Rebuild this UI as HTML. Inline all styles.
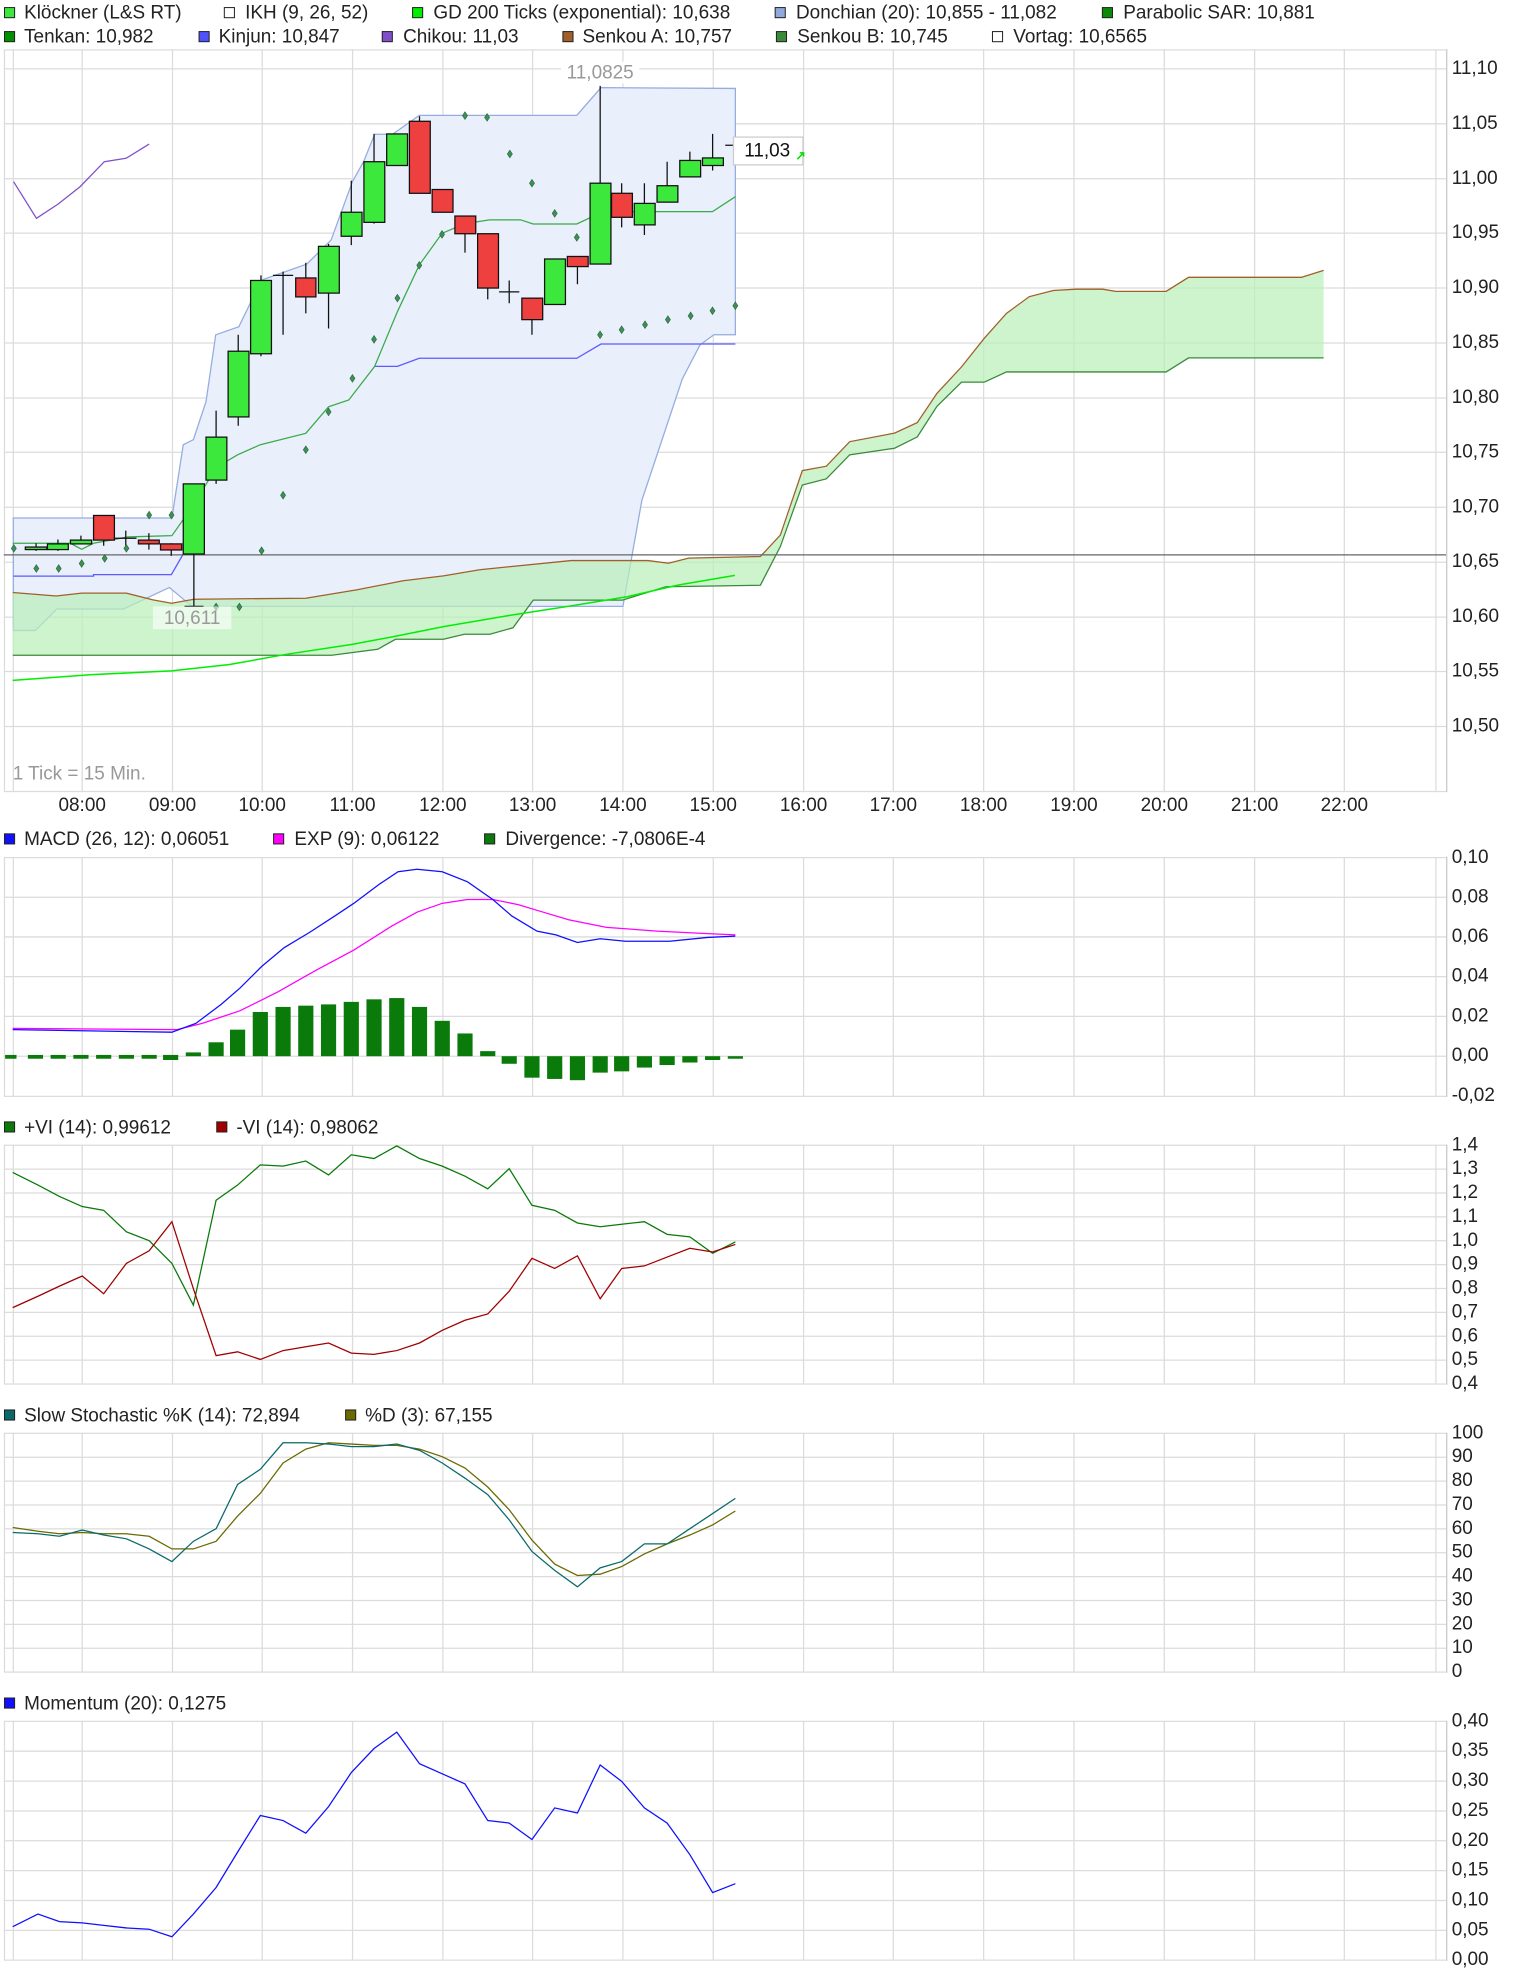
<!DOCTYPE html>
<html><head><meta charset="utf-8">
<style>
html,body{margin:0;padding:0;background:#fff;}
svg{display:block;}
text{font-family:"Liberation Sans",Arial,sans-serif;font-size:15px;fill:#222;}
.ax{dominant-baseline:middle;}
.hr{text-anchor:middle;dominant-baseline:middle;}
</style></head>
<body>
<svg width="1520" height="1981" viewBox="0 0 1203 1568" xmlns="http://www.w3.org/2000/svg">
<rect width="1203" height="1568" fill="#fff"/>
<!-- Legends -->
<g stroke="#222" stroke-width="0.8">
<rect x="3.5" y="6" width="8" height="8" fill="#3de83d"/>
<rect x="177.5" y="6" width="8" height="8" fill="#fff"/>
<rect x="326.5" y="6" width="8" height="8" fill="#00ee00"/>
<rect x="613.5" y="6" width="8" height="8" fill="#90aadd"/>
<rect x="872.5" y="6" width="8" height="8" fill="#0a8a0a"/>
<rect x="3.5" y="25" width="8" height="8" fill="#009000"/>
<rect x="157.5" y="25" width="8" height="8" fill="#5050ff"/>
<rect x="302.5" y="25" width="8" height="8" fill="#8050cc"/>
<rect x="445.5" y="25" width="8" height="8" fill="#a0602a"/>
<rect x="614.5" y="25" width="8" height="8" fill="#3a8a3a"/>
<rect x="785.5" y="25" width="8" height="8" fill="#fff"/>
<rect x="3.5" y="660" width="8" height="8" fill="#1010ff"/>
<rect x="216.5" y="660" width="8" height="8" fill="#ff00ff"/>
<rect x="383.5" y="660" width="8" height="8" fill="#0a7a0a"/>
<rect x="3.5" y="888" width="8" height="8" fill="#0a7a0a"/>
<rect x="171.5" y="888" width="8" height="8" fill="#a00000"/>
<rect x="3.5" y="1116" width="8" height="8" fill="#0a6a6a"/>
<rect x="273.5" y="1116" width="8" height="8" fill="#6a6a00"/>
<rect x="3.5" y="1344" width="8" height="8" fill="#1010ff"/>
</g>
<text x="19" y="14.5">Klöckner (L&amp;S RT)</text>
<text x="194" y="14.5">IKH (9, 26, 52)</text>
<text x="343" y="14.5">GD 200 Ticks (exponential): 10,638</text>
<text x="630" y="14.5">Donchian (20): 10,855 - 11,082</text>
<text x="889" y="14.5">Parabolic SAR: 10,881</text>
<text x="19" y="33.5">Tenkan: 10,982</text>
<text x="173" y="33.5">Kinjun: 10,847</text>
<text x="319" y="33.5">Chikou: 11,03</text>
<text x="461" y="33.5">Senkou A: 10,757</text>
<text x="631" y="33.5">Senkou B: 10,745</text>
<text x="802" y="33.5">Vortag: 10,6565</text>
<text x="19" y="669">MACD (26, 12): 0,06051</text>
<text x="233" y="669">EXP (9): 0,06122</text>
<text x="400" y="669">Divergence: -7,0806E-4</text>
<text x="19" y="897">+VI (14): 0,99612</text>
<text x="187" y="897">-VI (14): 0,98062</text>
<text x="19" y="1125">Slow Stochastic %K (14): 72,894</text>
<text x="289" y="1125">%D (3): 67,155</text>
<text x="19" y="1353">Momentum (20): 0,1275</text>

<!-- Grids -->
<g stroke="#dcdcdc" stroke-width="1" fill="none">
<!-- main -->
<rect x="3.5" y="39.5" width="1141.5" height="587"/>
<path d="M3 54.5H1145M3 98H1145M3 141.5H1145M3 184.5H1145M3 228H1145M3 271.5H1145M3 315H1145M3 358H1145M3 401.5H1145M3 445H1145M3 488.5H1145M3 531.5H1145M3 575H1145"/>
<path id="vg" d="M10.5 39V627M65 39V627M136.5 39V627M207.5 39V627M279 39V627M350.5 39V627M421.5 39V627M493 39V627M564.5 39V627M636 39V627M707 39V627M778.5 39V627M850 39V627M921.5 39V627M993 39V627M1064 39V627M1136.5 39V627"/>
<!-- MACD -->
<rect x="3.5" y="678.8" width="1141.5" height="189"/>
<path d="M3 710.2H1145M3 741.6H1145M3 773H1145M3 804.5H1145M3 836H1145"/>
<path d="M10.5 679V868M65 679V868M136.5 679V868M207.5 679V868M279 679V868M350.5 679V868M421.5 679V868M493 679V868M564.5 679V868M636 679V868M707 679V868M778.5 679V868M850 679V868M921.5 679V868M993 679V868M1064 679V868M1136.5 679V868"/>
<!-- VI -->
<rect x="3.5" y="906.5" width="1141.5" height="189"/>
<path d="M3 925.4H1145M3 944.3H1145M3 963.2H1145M3 982.1H1145M3 1001H1145M3 1019.9H1145M3 1038.8H1145M3 1057.7H1145M3 1076.6H1145"/>
<path d="M10.5 906V1095M65 906V1095M136.5 906V1095M207.5 906V1095M279 906V1095M350.5 906V1095M421.5 906V1095M493 906V1095M564.5 906V1095M636 906V1095M707 906V1095M778.5 906V1095M850 906V1095M921.5 906V1095M993 906V1095M1064 906V1095M1136.5 906V1095"/>
<!-- Stoch -->
<rect x="3.5" y="1134.5" width="1141.5" height="189"/>
<path d="M3 1153.4H1145M3 1172.3H1145M3 1191.2H1145M3 1210.1H1145M3 1229H1145M3 1247.9H1145M3 1266.8H1145M3 1285.7H1145M3 1304.6H1145"/>
<path d="M10.5 1134V1323M65 1134V1323M136.5 1134V1323M207.5 1134V1323M279 1134V1323M350.5 1134V1323M421.5 1134V1323M493 1134V1323M564.5 1134V1323M636 1134V1323M707 1134V1323M778.5 1134V1323M850 1134V1323M921.5 1134V1323M993 1134V1323M1064 1134V1323M1136.5 1134V1323"/>
<!-- Momentum -->
<rect x="3.5" y="1362.5" width="1141.5" height="189"/>
<path d="M3 1386.1H1145M3 1409.8H1145M3 1433.4H1145M3 1457H1145M3 1480.6H1145M3 1504.3H1145M3 1527.9H1145"/>
<path d="M10.5 1362V1551M65 1362V1551M136.5 1362V1551M207.5 1362V1551M279 1362V1551M350.5 1362V1551M421.5 1362V1551M493 1362V1551M564.5 1362V1551M636 1362V1551M707 1362V1551M778.5 1362V1551M850 1362V1551M921.5 1362V1551M993 1362V1551M1064 1362V1551M1136.5 1362V1551"/>
</g>

<!-- Main chart content -->
<!-- Donchian band -->
<path d="M10.5 410L136 410L145 352L153 348L163 318L170.7 265L189 258.6L207 221.6L242.8 209L262 190L278.9 143.8L287.7 128L296.5 106.3L310.7 106.3L331.8 91.3L456.5 91.3L475.6 69.4L582 70L582 265L565 265L554 273L540 300L508 396L493 480L152 480L134 465L98 482L45 482L28 499L10.5 499Z" fill="#e9effb" stroke="#94ace0" stroke-width="1"/>
<!-- Cloud -->
<path d="M10 469L44.4 471.7L64.6 469.5L100 469.5L121 474.8L135.7 477.5L153.5 474.3L242 473.5L282.7 466.8L319 459.7L351 455.8L379.6 451L404 448.5L452 443.7L513 443.7L529 445.8L545 441.8L601.8 440.5L617.6 423.5L635 372.5L654 369L672.5 349.6L708 342.8L726 334.5L741.6 311.3L761 290.4L779 267.8L796.6 248L814.6 234.8L833.6 229.9L851.6 228.9L872.8 228.9L883 230.6L923 230.6L940.7 219.5L1030 219.5L1047.6 214L1047.6 283.3L940.7 283.3L923 294.4L796.6 294.4L779 302.5L761 302.5L741.6 321.6L726 345.8L708 354.8L672.5 360L654 379L635 383.9L617.6 432.6L601.8 463.2L527 464.4L492.7 475L422 475L406 496.9L387.7 502L367.5 502L351 506L313 506L298.9 513.9L262.5 518.6L10 518.6Z" fill="#b9efb9" fill-opacity="0.7"/>
<polyline fill="none" stroke="#a0602a" stroke-width="1" points="10,469 44.4,471.7 64.6,469.5 100,469.5 121,474.8 135.7,477.5 153.5,474.3 242,473.5 282.7,466.8 319,459.7 351,455.8 379.6,451 404,448.5 452,443.7 513,443.7 529,445.8 545,441.8 601.8,440.5 617.6,423.5 635,372.5 654,369 672.5,349.6 708,342.8 726,334.5 741.6,311.3 761,290.4 779,267.8 796.6,248 814.6,234.8 833.6,229.9 851.6,228.9 872.8,228.9 883,230.6 923,230.6 940.7,219.5 1030,219.5 1047.6,214"/>
<polyline fill="none" stroke="#3a8a3a" stroke-width="1" points="10,518.6 262.5,518.6 298.9,513.9 313,506 351,506 367.5,502 387.7,502 406,496.9 422,475 492.7,475 527,464.4 601.8,463.2 617.6,432.6 635,383.9 654,379 672.5,360 708,354.8 726,345.8 741.6,321.6 761,302.5 779,302.5 796.6,294.4 923,294.4 940.7,283.3 1047.6,283.3"/>
<!-- GD200 -->
<polyline fill="none" stroke="#00ee00" stroke-width="1.2" points="10,538.5 72.7,534 135.7,531 181.7,526 226,518 278.7,510 311,504 351,496 404,487 452,479.6 496.8,472.2 537,463 581.6,455.4"/>
<!-- Kijun -->
<polyline fill="none" stroke="#5a5aff" stroke-width="1" points="10.5,456 74,456 74,454.8 135.6,454.8 145,438.5"/>
<polyline fill="none" stroke="#5a5aff" stroke-width="1" points="296.5,290 314.5,290 331.8,283.6 456.5,283.6 475.6,272.3 582,272.3"/>
<!-- Tenkan -->
<polyline fill="none" stroke="#3aaa4a" stroke-width="1" points="10,430 55.7,430 64.6,434.8 74,430 101,425 136,424 153,400 171,370 188,360 206,352 242,343 260,322 276,316.6 296.5,290 314.5,246.7 331.8,209.8 349.8,184.7 368,177 387.4,174 412,174 422,177.3 456.5,177.3 466,172.8 475.6,167.5 563.9,167.5 582,155.7"/>
<!-- Chikou -->
<polyline fill="none" stroke="#8050cc" stroke-width="1" points="10.7,143.8 28.8,172.8 46,161.5 63.3,147.8 82.5,128 99.7,125.3 118,114"/>
<!-- Vortag -->
<line x1="3" y1="439.2" x2="1145" y2="439.2" stroke="#666" stroke-width="1"/>
<!-- Candles wicks -->
<g stroke="#111" stroke-width="1">
<path d="M28.5 430V436M45.8 427V436M64 424V431M82 408V432M99.5 420V432M117.8 422V435M135.5 430V440M153.4 383V480M171 325V383M188.5 265V337M206.5 218V282M224 215V265M242 208V248M260 193V260M278 143V194M296 106V177M314 106V131M332 92V153M350 150V168M368 171V200M386 185V237M403 222V240M421 236V265M439 205V241M457 203V225M475 68V209M492 145V180M510 145V186M528 128V160M546 120V140M564 106V135M582 110V131"/>
<path d="M91 426H108M216 218H232M395 231H411M574 115H590M146 480H161M224 218"/>
</g>
<g stroke="#111" stroke-width="1">
<rect x="20" y="433" width="17" height="2" fill="#3de83d"/>
<rect x="37.5" y="430.5" width="16.5" height="4.5" fill="#3de83d"/>
<rect x="55.7" y="427.5" width="16.8" height="3" fill="#3de83d"/>
<rect x="74" y="408" width="16.5" height="19.5" fill="#ef4040"/>
<rect x="109.5" y="427.5" width="16.5" height="3" fill="#ef4040"/>
<rect x="127" y="430.5" width="16.8" height="4.8" fill="#ef4040"/>
<rect x="145" y="383" width="16.7" height="55.5" fill="#3de83d"/>
<rect x="163" y="346" width="16.5" height="34" fill="#3de83d"/>
<rect x="180.5" y="278" width="16.5" height="52" fill="#3de83d"/>
<rect x="198.3" y="222" width="16.5" height="58" fill="#3de83d"/>
<rect x="234" y="220" width="16" height="15" fill="#ef4040"/>
<rect x="252" y="195" width="16.5" height="37" fill="#3de83d"/>
<rect x="270" y="168" width="16.5" height="19" fill="#3de83d"/>
<rect x="288" y="128" width="16.5" height="48" fill="#3de83d"/>
<rect x="306" y="106" width="16.5" height="25" fill="#3de83d"/>
<rect x="324" y="96" width="16.5" height="57" fill="#ef4040"/>
<rect x="342" y="150" width="16.5" height="18" fill="#ef4040"/>
<rect x="360" y="171" width="16.5" height="14" fill="#ef4040"/>
<rect x="378" y="185" width="16.5" height="43" fill="#ef4040"/>
<rect x="413" y="236" width="16.5" height="17" fill="#ef4040"/>
<rect x="431" y="205" width="16.5" height="36" fill="#3de83d"/>
<rect x="449" y="203" width="16.5" height="8" fill="#ef4040"/>
<rect x="467" y="145" width="16.5" height="64" fill="#3de83d"/>
<rect x="484" y="153" width="16.5" height="19" fill="#ef4040"/>
<rect x="502" y="161" width="16.5" height="17" fill="#3de83d"/>
<rect x="520" y="147" width="16.5" height="13" fill="#3de83d"/>
<rect x="538" y="127" width="16.5" height="13" fill="#3de83d"/>
<rect x="556" y="125" width="16.5" height="6" fill="#3de83d"/>
</g>
<!-- SAR -->
<g fill="#3f8f5a" stroke="#2a6a3a" stroke-width="0.5">
<path d="M10.9 431l2 3-2 3-2-3z M28.7 447l2 3-2 3-2-3z M46.4 447l2 3-2 3-2-3z M64.6 443l2 3-2 3-2-3z M82.8 439l2 3-2 3-2-3z M100 431l2 3-2 3-2-3z M118 404.7l2 3-2 3-2-3z M135.7 404.7l2 3-2 3-2-3z M171 477.4l2 3-2 3-2-3z M189.4 477.4l2 3-2 3-2-3z M207 432.9l2 3-2 3-2-3z M224 389l2 3-2 3-2-3z M242 353l2 3-2 3-2-3z M260 323l2 3-2 3-2-3z M278.9 296.5l2 3-2 3-2-3z M296 265.6l2 3-2 3-2-3z M314.5 233l2 3-2 3-2-3z M331.8 207l2 3-2 3-2-3z M349.8 182.5l2 3-2 3-2-3z M368 88.5l2 3-2 3-2-3z M385.5 89.9l2 3-2 3-2-3z M403.5 118.9l2 3-2 3-2-3z M421 142l2 3-2 3-2-3z M439 165.9l2 3-2 3-2-3z M456.5 184.9l2 3-2 3-2-3z M474.9 262l2 3-2 3-2-3z M492 258l2 3-2 3-2-3z M510.5 254l2 3-2 3-2-3z M528.6 250l2 3-2 3-2-3z M546.6 247l2 3-2 3-2-3z M563.9 243l2 3-2 3-2-3z M582 239l2 3-2 3-2-3z"/>
</g>
<!-- labels -->
<rect x="444" y="49" width="62" height="17" fill="#fff"/>
<text x="475" y="58" class="hr" fill="#999" style="fill:#999">11,0825</text>
<rect x="121" y="480" width="62" height="18" fill="#fff" fill-opacity="0.6"/>
<text x="152" y="490" class="hr" style="fill:#999">10,611</text>
<rect x="580.5" y="108.5" width="55" height="22" fill="#fff" stroke="#ccc"/>
<text x="589" y="120" class="ax" style="fill:#111">11,03</text>
<path d="M631 126l5-5M633 121h3v3" stroke="#00dd00" stroke-width="1.2" fill="none"/>
<text x="10" y="613" class="ax" style="fill:#999">1 Tick = 15 Min.</text>
<!-- main axis -->
<line x1="1145" y1="39" x2="1145" y2="627" stroke="#ccc"/>
<g class="ax">
<text x="1149" y="54.5" class="ax">11,10</text><text x="1149" y="98" class="ax">11,05</text><text x="1149" y="141.5" class="ax">11,00</text><text x="1149" y="184.5" class="ax">10,95</text><text x="1149" y="228" class="ax">10,90</text><text x="1149" y="271.5" class="ax">10,85</text><text x="1149" y="315" class="ax">10,80</text><text x="1149" y="358" class="ax">10,75</text><text x="1149" y="401.5" class="ax">10,70</text><text x="1149" y="445" class="ax">10,65</text><text x="1149" y="488.5" class="ax">10,60</text><text x="1149" y="531.5" class="ax">10,55</text><text x="1149" y="575" class="ax">10,50</text>
</g>
<text x="65" y="638" class="hr">08:00</text><text x="136.5" y="638" class="hr">09:00</text><text x="207.5" y="638" class="hr">10:00</text><text x="279" y="638" class="hr">11:00</text><text x="350.5" y="638" class="hr">12:00</text><text x="421.5" y="638" class="hr">13:00</text><text x="493" y="638" class="hr">14:00</text><text x="564.5" y="638" class="hr">15:00</text><text x="636" y="638" class="hr">16:00</text><text x="707" y="638" class="hr">17:00</text><text x="778.5" y="638" class="hr">18:00</text><text x="850" y="638" class="hr">19:00</text><text x="921.5" y="638" class="hr">20:00</text><text x="993" y="638" class="hr">21:00</text><text x="1064" y="638" class="hr">22:00</text>

<!-- MACD -->
<line x1="1145" y1="678" x2="1145" y2="868" stroke="#ccc"/>
<text x="1149" y="679" class="ax">0,10</text><text x="1149" y="710.2" class="ax">0,08</text><text x="1149" y="741.6" class="ax">0,06</text><text x="1149" y="773" class="ax">0,04</text><text x="1149" y="804.5" class="ax">0,02</text><text x="1149" y="836" class="ax">0,00</text><text x="1149" y="867.5" class="ax">-0,02</text>
<g fill="#0a7a0a">
<rect x="4" y="835" width="9" height="3"/><rect x="22" y="835" width="12" height="3"/><rect x="40" y="835" width="12" height="3"/><rect x="58" y="835" width="12" height="3"/><rect x="76" y="835" width="12" height="3"/><rect x="94" y="835" width="12" height="3"/><rect x="112" y="835" width="12" height="3"/><rect x="129" y="835" width="12" height="4"/>
<rect x="147" y="833" width="12" height="3"/><rect x="165" y="825" width="12" height="11"/><rect x="182" y="815" width="12" height="21"/><rect x="200" y="801" width="12" height="35"/><rect x="218" y="797" width="12" height="39"/><rect x="236" y="796" width="12" height="40"/><rect x="254" y="795" width="12" height="41"/><rect x="272" y="793" width="12" height="43"/><rect x="290" y="791" width="12" height="45"/><rect x="308" y="790" width="12" height="46"/><rect x="326" y="797" width="12" height="39"/><rect x="344" y="808" width="12" height="28"/><rect x="362" y="818" width="12" height="18"/><rect x="380" y="832" width="12" height="4"/>
<rect x="397" y="836" width="12" height="6"/><rect x="415" y="836" width="12" height="17"/><rect x="433" y="836" width="12" height="18"/><rect x="451" y="836" width="12" height="19"/><rect x="469" y="836" width="12" height="13"/><rect x="486" y="836" width="12" height="12"/><rect x="504" y="836" width="12" height="9"/><rect x="522" y="836" width="12" height="7"/><rect x="540" y="836" width="12" height="5"/><rect x="558" y="836" width="12" height="3"/><rect x="576" y="836" width="12" height="2"/>
</g>
<polyline fill="none" stroke="#ff00ff" stroke-width="1" points="10,814 140,815 160,810 190,800 220,785 250,768 280,752 310,733 330,722 350,715 370,712 390,712 410,716 430,722 450,728 480,734 520,737 560,739 582,740"/>
<polyline fill="none" stroke="#1010ff" stroke-width="1" points="10,815 136,817 155,810 175,795 190,782 207,765 225,750 245,738 265,725 280,715 300,700 315,690 330,688 350,690 370,698 390,712 405,725 425,737 440,740 457,746 475,743 495,745 530,745 560,742 582,741"/>

<!-- VI -->
<line x1="1145" y1="906" x2="1145" y2="1096" stroke="#ccc"/>
<text x="1149" y="906.5" class="ax">1,4</text><text x="1149" y="925.4" class="ax">1,3</text><text x="1149" y="944.3" class="ax">1,2</text><text x="1149" y="963.2" class="ax">1,1</text><text x="1149" y="982.1" class="ax">1,0</text><text x="1149" y="1001" class="ax">0,9</text><text x="1149" y="1019.9" class="ax">0,8</text><text x="1149" y="1038.8" class="ax">0,7</text><text x="1149" y="1057.7" class="ax">0,6</text><text x="1149" y="1076.6" class="ax">0,5</text><text x="1149" y="1095.5" class="ax">0,4</text>
<polyline fill="none" stroke="#0a7a0a" stroke-width="1" points="10,928 30,938 47,947 65,955 82,958 100,975 118,982 136,1000 153,1033 171,950 188,938 206,922 224,923 242,919 260,930 278,914 296,917 314,907 332,917 350,923 368,931 386,941 403,925 421,954 439,958 457,968 475,971 492,969 510,967 528,977 546,979 564,992 582,983"/>
<polyline fill="none" stroke="#a00000" stroke-width="1" points="10,1035 30,1026 47,1018 65,1010 82,1024 100,1000 118,990 136,967 153,1020 171,1073 188,1070 206,1076 224,1069 242,1066 260,1063 278,1071 296,1072 314,1069 332,1063 350,1053 368,1045 386,1040 403,1022 421,996 439,1004 457,994 475,1028 492,1004 510,1002 528,995 546,988 564,991 582,985"/>

<!-- Stoch -->
<line x1="1145" y1="1134" x2="1145" y2="1324" stroke="#ccc"/>
<text x="1149" y="1134.5" class="ax">100</text><text x="1149" y="1153.4" class="ax">90</text><text x="1149" y="1172.3" class="ax">80</text><text x="1149" y="1191.2" class="ax">70</text><text x="1149" y="1210.1" class="ax">60</text><text x="1149" y="1229" class="ax">50</text><text x="1149" y="1247.9" class="ax">40</text><text x="1149" y="1266.8" class="ax">30</text><text x="1149" y="1285.7" class="ax">20</text><text x="1149" y="1304.6" class="ax">10</text><text x="1149" y="1323.5" class="ax">0</text>
<polyline fill="none" stroke="#6a6a00" stroke-width="1" points="10,1209 30,1212 47,1214 65,1213 82,1214 100,1214 118,1216 136,1226 153,1226 171,1220 188,1200 206,1182 224,1158 242,1147 260,1142 278,1143 296,1144 314,1144 332,1147 350,1153 368,1162 386,1177 403,1195 421,1219 439,1238 457,1247 475,1246 492,1240 510,1230 528,1222 546,1215 564,1207 582,1196"/>
<polyline fill="none" stroke="#0a6a6a" stroke-width="1" points="10,1213 30,1214 47,1216 65,1211 82,1215 100,1218 118,1226 136,1236 153,1220 171,1210 188,1175 206,1163 224,1142 242,1142 260,1143 278,1145 296,1145 314,1143 332,1148 350,1158 368,1170 386,1183 403,1203 421,1228 439,1243 457,1256 475,1241 492,1236 510,1222 528,1222 546,1210 564,1198 582,1186"/>

<!-- Momentum -->
<line x1="1145" y1="1362" x2="1145" y2="1552" stroke="#ccc"/>
<text x="1149" y="1362.5" class="ax">0,40</text><text x="1149" y="1386.1" class="ax">0,35</text><text x="1149" y="1409.8" class="ax">0,30</text><text x="1149" y="1433.4" class="ax">0,25</text><text x="1149" y="1457" class="ax">0,20</text><text x="1149" y="1480.6" class="ax">0,15</text><text x="1149" y="1504.3" class="ax">0,10</text><text x="1149" y="1527.9" class="ax">0,05</text><text x="1149" y="1551.5" class="ax">0,00</text>
<polyline fill="none" stroke="#1010ff" stroke-width="1" points="10,1525 30,1515 47,1521 65,1522 82,1524 100,1526 118,1527 136,1533 153,1515 171,1494 188,1466 206,1437 224,1441 242,1451 260,1430 278,1403 296,1384 314,1371 332,1396 350,1404 368,1412 386,1441 403,1443 421,1456 439,1431 457,1435 475,1397 492,1410 510,1431 528,1443 546,1468 564,1498 582,1491"/>
</svg>
</body></html>
